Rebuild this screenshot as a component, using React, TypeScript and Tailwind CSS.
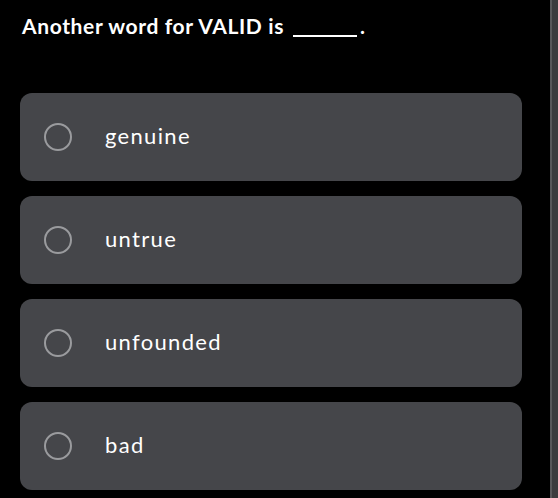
export default function App() {
  const options = ["genuine", "untrue", "unfounded", "bad"];
  return (
    <div className="w-[558px] h-[498px] bg-black flex overflow-hidden" style={{ fontFamily: '"Lato", "Open Sans", sans-serif' }}>
      <div className="flex-1 flex flex-col pl-[20px] pr-[28px]">
        <div className="pt-[12px] pl-[2px] h-[93px] text-white text-[21px] font-bold leading-[28px] tracking-[0.03em] flex items-start">
          <span>Another word for VALID is</span>
          <span className="inline-block w-[64px] h-[25px] border-b-2 border-white ml-[9px]" />
          <span className="ml-[3px]">.</span>
        </div>
        <div className="flex flex-col gap-[15px]">
          {options.map((o) => (
            <div key={o} className="h-[88px] rounded-[12px] bg-[#45464a] flex items-center pl-[23px]">
              <div className="w-[28px] h-[28px] rounded-full border-2 border-[#9a9b9e] shrink-0 ml-[1px]" />
              <div className="ml-[33px] text-white text-[22px] tracking-[0.06em] leading-none pb-[2px]">{o}</div>
            </div>
          ))}
        </div>
      </div>
      <div className="w-[8px] h-full bg-[#3c3c3e] border-l-[2px] border-[#58585a]" />
    </div>
  );
}
